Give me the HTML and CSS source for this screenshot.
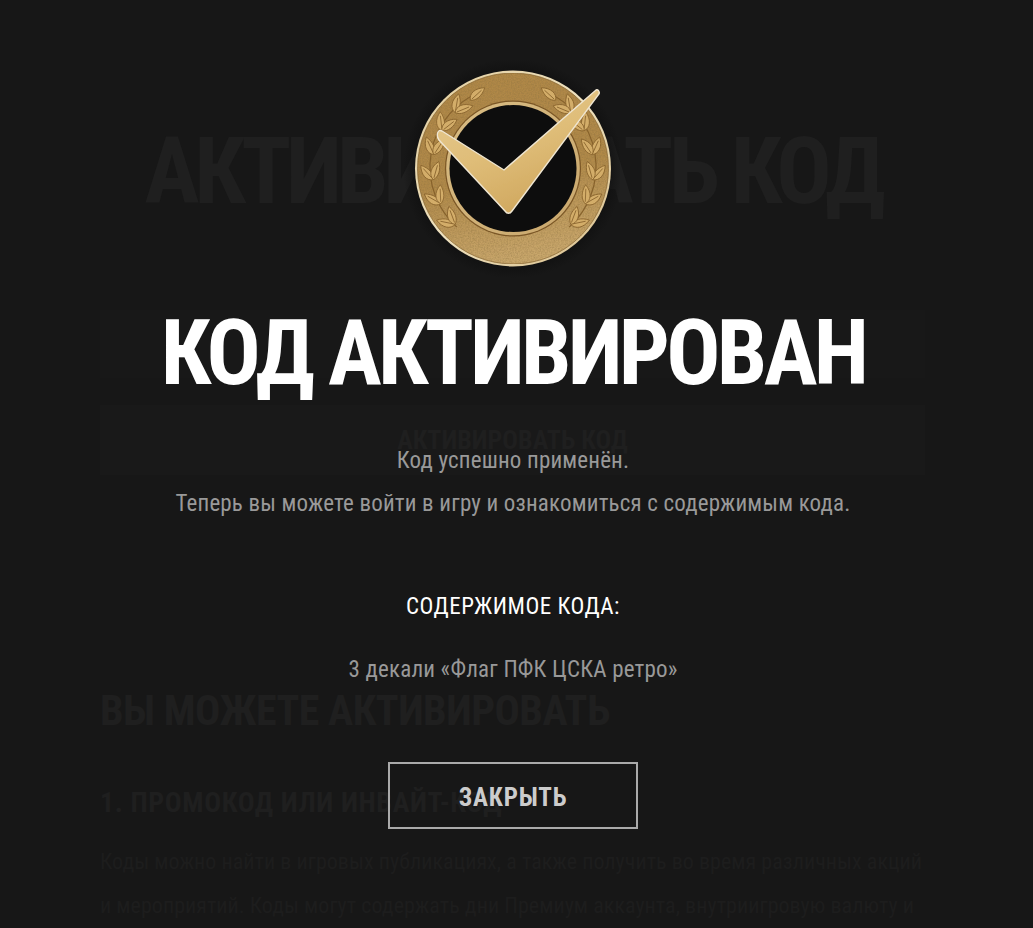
FILE: index.html
```html
<!DOCTYPE html>
<html lang="en">
<head>
  <meta charset="UTF-8"/>
  <title>Код активирован</title>
  <link rel="stylesheet" href="styles.css">
</head>
<body>
  <div class="page">
    <h1 class="page-title">АКТИВИРОВАТЬ КОД</h1>
    <div class="code-input"></div>
    <div class="code-btn">АКТИВИРОВАТЬ КОД</div>
    <h2 class="page-sub">ВЫ МОЖЕТЕ АКТИВИРОВАТЬ</h2>
    <h3 class="page-item">1. ПРОМОКОД ИЛИ ИНВАЙТ-КОД</h3>
    <p class="page-line">Коды можно найти в игровых публикациях, а также получить во время различных акций</p>
    <p class="page-line">и мероприятий. Коды могут содержать дни Премиум аккаунта, внутриигровую валюту и</p>
  </div>

  <div class="overlay">
    <svg class="medal" viewBox="0 0 220 220" width="220" height="220">
      <defs>
        <radialGradient id="medalShade">
          <stop offset="0.8" stop-color="#0e0e0e"/>
          <stop offset="1" stop-color="#0e0e0e" stop-opacity="0"/>
        </radialGradient>
        <linearGradient id="ringFill" x1="0.2" y1="0" x2="0.4" y2="1">
          <stop offset="0" stop-color="#b08847"/>
          <stop offset="0.55" stop-color="#b08949"/>
          <stop offset="1" stop-color="#c9a76c"/>
        </linearGradient>
        <linearGradient id="rimFill" x1="0" y1="0" x2="1" y2="1">
          <stop offset="0" stop-color="#e2cd9d"/>
          <stop offset="0.5" stop-color="#efe2c0"/>
          <stop offset="1" stop-color="#d8bd88"/>
        </linearGradient>
        <linearGradient id="innerRim" x1="0" y1="0" x2="1" y2="1">
          <stop offset="0" stop-color="#d9bd84"/>
          <stop offset="1" stop-color="#c9a76c"/>
        </linearGradient>
        <linearGradient id="checkFill" x1="0" y1="0" x2="0.5" y2="1">
          <stop offset="0" stop-color="#e6cb93"/>
          <stop offset="0.55" stop-color="#dfbd78"/>
          <stop offset="1" stop-color="#d0a85f"/>
        </linearGradient>
        <filter id="grain" x="0" y="0" width="100%" height="100%">
          <feTurbulence type="fractalNoise" baseFrequency="0.7" numOctaves="2" seed="4"/>
          <feColorMatrix values="0 0 0 0 0.25  0 0 0 0 0.16  0 0 0 0 0.05  0 0 0 0.9 -0.3"/>
          <feComposite in2="SourceGraphic" operator="in"/>
          <feMerge>
            <feMergeNode in="SourceGraphic"/>
            <feMergeNode/>
          </feMerge>
        </filter>
        <filter id="soft"><feGaussianBlur stdDeviation="0.4"/></filter>
        <path id="leaf" d="M0 0C3 -6 11 -7 19 -1C12 4 4 4 0 0ZM2 0L15 -1" fill="#d3ad69" stroke="#87622c" stroke-width="0.800"/>
        <g id="pair">
          <use href="#leaf" transform="rotate(-30)"/>
          <use href="#leaf" transform="rotate(28)"/>
        </g>
        <g id="branch">
          <path d="M56.800 167.100A81 81 0 0 1 80 32" fill="none" stroke="#87622c" stroke-width="1.200"/>
          <use href="#pair" transform="rotate(-134 113 108.500) translate(113 28)"/>
          <use href="#pair" transform="rotate(-116 113 108.500) translate(113 28)"/>
          <use href="#pair" transform="rotate(-98 113 108.500) translate(113 28)"/>
          <use href="#pair" transform="rotate(-80 113 108.500) translate(113 28)"/>
          <use href="#pair" transform="rotate(-62 113 108.500) translate(113 28)"/>
          <use href="#pair" transform="rotate(-46 113 108.500) translate(113 28)"/>
          <use href="#leaf" transform="rotate(-32 113 108.500) translate(113 28) rotate(-6)"/>
        </g>
      </defs>
      <circle cx="113" cy="108.500" r="110" fill="url(#medalShade)"/>
      <g filter="url(#soft)">
        <circle cx="113" cy="108.500" r="98" fill="url(#rimFill)"/>
        <circle cx="113" cy="108.500" r="95.500" fill="url(#ringFill)" stroke="#7d5a2a" stroke-width="0.600" filter="url(#grain)"/>
        <use href="#branch"/>
        <use href="#branch" transform="matrix(-1 0 0 1 226 0)"/>
        <circle cx="113" cy="108.500" r="68" fill="#7a5626"/>
        <circle cx="113" cy="108.500" r="66.800" fill="url(#innerRim)"/>
        <circle cx="113" cy="108.500" r="63.500" fill="#0e0d0c"/>
        <path d="M38 72C38.500 70.500 40 70 42 71L104 110L196 30C198 29 200 32 199 34L112 151C110 154 107 154 105 151L39 80C37 77 37 74 38 72Z" fill="url(#checkFill)" stroke="#efe6d2" stroke-width="1.400"/>
      </g>
    </svg>
    <h1 class="title">КОД АКТИВИРОВАН</h1>
    <p class="text text-first">Код успешно применён.</p>
    <p class="text">Теперь вы можете войти в игру и ознакомиться с содержимым кода.</p>
    <h4 class="label">СОДЕРЖИМОЕ КОДА:</h4>
    <p class="text">3 декали «Флаг ПФК ЦСКА ретро»</p>
    <button class="close-btn">ЗАКРЫТЬ</button>
  </div>
</body>
</html>
```

FILE: styles.css
```css
* {
  box-sizing: border-box;
  margin: 0;
  padding: 0;
}

body {
  height: 928px;
  overflow: hidden;
  position: relative;
  background: #171717;
  font-family: 'Roboto', sans-serif;
  font-stretch: 75%;
  white-space: nowrap;
}

/* page behind the popup, almost invisible */
.page {
  padding: 0 108px 0 100px;
  color: #1f1f1f;
  display: flex;
  flex-direction: column;
}

.page-title {
  font-size: 92px;
  line-height: 100px;
  font-weight: 700;
  letter-spacing: -5px;
  text-align: center;
  margin-top: 122px;
}

.code-input {
  height: 68px;
  margin-top: 88px;
  background: #181818;
}

.code-btn {
  height: 70px;
  margin-top: 27px;
  background: #191919;
  font-size: 26px;
  line-height: 70px;
  font-weight: 700;
  text-align: center;
}

.page-sub {
  font-size: 42px;
  line-height: 50px;
  letter-spacing: -0.5px;
  margin-top: 211px;
}

.page-item {
  font-size: 28px;
  line-height: 36px;
  letter-spacing: 0.6px;
  margin-top: 49px;
}

.page-line {
  font-size: 22px;
  line-height: 44px;
  letter-spacing: 0.04px;
  color: #1d1d1d;
}

.page-item + .page-line {
  margin-top: 19px;
}

.overlay {
  position: absolute;
  inset: 0 7px 0 0;
  display: flex;
  flex-direction: column;
  align-items: center;
  padding-top: 60px;
}

.medal {
  display: block;
  margin-right: 6px;
}

.title {
  font-size: 90px;
  line-height: 100px;
  font-weight: 700;
  letter-spacing: -3.7px;
  color: #fff;
  margin-top: 24px;
}

.text {
  font-size: 23px;
  line-height: 30px;
  letter-spacing: 0.17px;
  color: #999;
  margin-top: 13px;
}

.text-first {
  margin-top: 42px;
}

.label {
  font-size: 23px;
  line-height: 30px;
  font-weight: 400;
  letter-spacing: 0.5px;
  color: #fff;
  margin-top: 73px;
}

.label + .text {
  margin-top: 33px;
}

.close-btn {
  width: 250px;
  height: 67px;
  margin-top: 77px;
  padding-top: 3px;
  background: transparent;
  border: 2px solid #aaa;
  color: #ccc;
  font-family: inherit;
  font-stretch: inherit;
  font-size: 25px;
  font-weight: 700;
  letter-spacing: 0.800px;
}
```
